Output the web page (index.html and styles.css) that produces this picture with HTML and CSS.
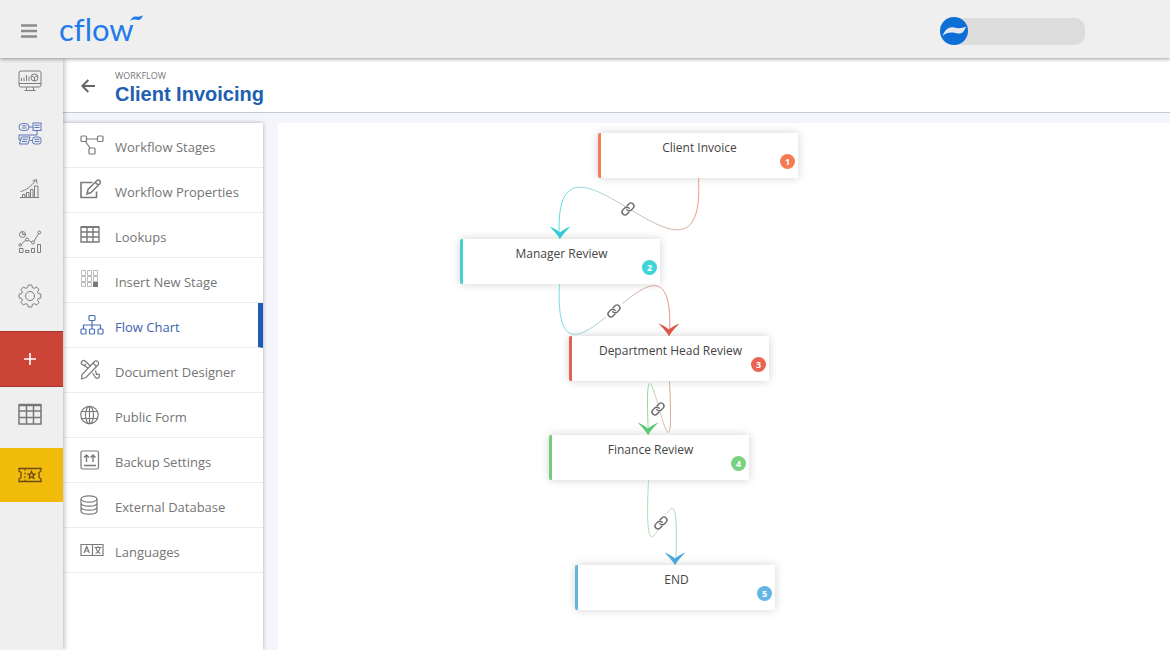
FILE: index.html
```html
<!DOCTYPE html>
<html lang="en">
<head>
    <meta charset="UTF-8">
    <meta name="viewport" content="width=device-width, initial-scale=1.0">
    <title>Cflow - Client Invoicing</title>
    <link rel="stylesheet" href="styles.css">
</head>
<body>
    <header class="topbar">
        <button class="menu-toggle" aria-label="Toggle menu">
            <svg width="16" height="14" viewBox="0 0 16 14"><path d="M0 1.5h16M0 7h16M0 12.5h16" stroke="#8c8c8c" stroke-width="2.4"/></svg>
        </button>
        <a class="logo" href="#" aria-label="cflow home">
            <span>cflow</span>
            <svg width="13" height="8" viewBox="0 0 13 8"><path d="M0 6C2 2 4 1 6.500 1.500C9 2 11 1.500 13 0C12 3.500 10 5.500 7.500 5C4.500 4.300 2.500 4.500 0 6z" fill="#1f7bea"/></svg>
        </a>
        <div class="user">
            <svg class="avatar" width="28" height="28" viewBox="0 0 28 28">
                <circle cx="14" cy="14" r="14" fill="#0d6fd6"/>
                <path d="M2.500 19C5.500 12 9 9.500 14 10.500C18 11.500 22 11.500 26 9.500C24.500 14 22.500 17 18 16.500C12.500 15.500 8 14 2.500 19z" fill="#e6e9ec"/>
            </svg>
            <span class="user-name"></span>
        </div>
    </header>

    <div class="shell">
        <nav class="rail" aria-label="Main">
            <a href="#" aria-label="Dashboard">
                <svg width="24" height="24" viewBox="0 0 24 24">
                    <rect x="1" y="2" width="22" height="16" rx="2"/>
                    <path d="M1 14.500h22M9 18l-1 3.500h8l-1-3.500M6.500 21.500h11M3.500 12V9M6 12V8.500M8.500 12V6M11 12V7.500"/>
                    <circle cx="16.500" cy="8.500" r="3.500"/><path d="M16.500 12V8.500l-3-1.700M16.500 8.500l3-1.700"/>
                </svg>
            </a>
            <a href="#" class="current" aria-label="Workflows">
                <svg width="24" height="24" viewBox="0 0 24 24">
                    <rect x="1" y="1.500" width="10" height="7" rx="3.500"/>
                    <rect x="15" y="1" width="8" height="7.500"/>
                    <path d="M11 5h4M4 3.800h4.500M4 6h4.500M16.500 3.300h5M16.500 5.500h5M19 8.500V13H1v5h2M3.500 15h8.500l-2 7H1.500zM4.500 17.300h5M4 19.500h5M12 18.500h3M16.500 17.300h5M16.500 19.500h5"/>
                    <rect x="14.500" y="15" width="8.500" height="7" rx="2.500"/>
                </svg>
            </a>
            <a href="#" aria-label="Reports">
                <svg width="24" height="24" viewBox="0 0 24 24">
                    <path d="M2 21.500h19M4.500 21.500v-3h2.500v3M8.500 21.500v-5H11v5M12.500 21.500v-8h2.500v8M16.500 21.500V10H20v11.500M2.500 15.500C8 14.500 13 10.500 17.500 4.500M14.500 5l4-1.500.5 4"/>
                </svg>
            </a>
            <a href="#" aria-label="Analytics">
                <svg width="24" height="24" viewBox="0 0 24 24">
                    <circle cx="4.500" cy="4.500" r="3"/><path d="M4.500 1.500v3h3M3.300 14.200l4.400-4M10.500 10.300l3 1.700M16 11.200l4.500-7.500"/>
                    <circle cx="2.200" cy="15" r="1.300"/><circle cx="9" cy="9.500" r="1.500"/><circle cx="15" cy="12.500" r="1.500"/><circle cx="21.300" cy="2.500" r="1.400"/>
                    <path d="M1.500 18.500h3.500v4H1.500zM7.500 20.500H11v2H7.500zM13.500 18.500h3v4h-3zM19.500 14.500h3v8h-3z"/>
                </svg>
            </a>
            <a href="#" aria-label="Settings">
                <svg width="24" height="24" viewBox="0 0 24 24">
                    <circle cx="12" cy="12" r="4.500"/>
                    <path d="M10.300 1h3.400l.8 2.700 1.600.7 2.500-1.400 2.400 2.400-1.400 2.500.7 1.600 2.700.8v3.400l-2.700.8-.7 1.600 1.400 2.500-2.400 2.400-2.500-1.400-1.600.7-.8 2.700h-3.400l-.8-2.700-1.600-.7L5.400 21 3 18.600l1.400-2.500-.7-1.600L1 13.700v-3.400l2.700-.8.7-1.600L3 5.400 5.400 3l2.500 1.400 1.600-.7z" stroke-linejoin="round"/>
                </svg>
            </a>
            <button class="rail-add" aria-label="Add">
                <svg width="12" height="12" viewBox="0 0 12 12"><path d="M6 0v12M0 6h12" stroke="#fff" stroke-width="1.600"/></svg>
            </button>
            <a href="#" class="rail-table" aria-label="Tables">
                <svg width="24" height="22" viewBox="0 0 24 22"><path d="M1 2h22" stroke-width="2.500"/><path d="M1 1v20h22V1M1 8h22M1 14.500h22M8.500 1v20M15.500 1v20" stroke-width="1.500"/></svg>
            </a>
            <a href="#" class="rail-ticket" aria-label="Tickets">
                <svg width="24" height="16" viewBox="0 0 24 16">
                    <path d="M1 1.500h22v2.500l-2 1.500v5l2 1.500v2.500H1V12l2-1.500v-5L1 4z"/><path d="M7 2v12" stroke-width="1" stroke-dasharray="2 1.500"/>
                    <path d="M13.500 4.500l1 2.300 2.500.2-1.900 1.700.6 2.500-2.200-1.300-2.200 1.300.6-2.500L10 7l2.500-.2z"/>
                </svg>
            </a>
        </nav>

        <main class="page">
            <div class="page-head">
                <a class="back" href="#" aria-label="Back">
                    <svg width="14" height="14" viewBox="0 0 14 14"><path d="M14 7H1.500M7.300 1L1.300 7l6 6" fill="none" stroke="#666" stroke-width="2"/></svg>
                </a>
                <div>
                    <div class="crumb">WORKFLOW</div>
                    <h1>Client Invoicing</h1>
                </div>
            </div>

            <div class="page-body">
                <nav class="side-menu" aria-label="Workflow">
                    <a href="#">
                        <svg width="24" height="24" viewBox="0 0 24 24"><rect x="1" y="3" width="5.500" height="5.500" rx="1"/><rect x="17.500" y="3" width="5.500" height="5.500" rx="1"/><rect x="9" y="15" width="6" height="6" rx="1"/><path d="M6.500 6h11M5.500 8.500l4.500 6.500"/></svg>
                        Workflow Stages
                    </a>
                    <a href="#">
                        <svg width="24" height="24" viewBox="0 0 24 24"><path d="M12.500 4.500H1v15h15.500v-6" stroke-width="1.600"/><path d="M7 16l1-4.500 9-9c2-1.500 4.500 1 3 3l-9 9zM15.500 4.500l3 3" stroke-width="1.500"/></svg>
                        Workflow Properties
                    </a>
                    <a href="#">
                        <svg width="24" height="24" viewBox="0 0 24 24"><path d="M1 4h18" stroke-width="2"/><path d="M1 3.500v15.500h18V3.500M1 9h18M1 14h18M7 4v15M13 4v15" stroke-width="1.400"/></svg>
                        Lookups
                    </a>
                    <a href="#">
                        <svg width="24" height="24" viewBox="0 0 24 24"><g stroke="#bbb" stroke-width="1"><path d="M1.500 2.500h4v5h-4zM7.500 2.500h4v5h-4zM13.500 2.500h4v5h-4zM1.500 8.500h4v5h-4zM7.500 8.500h4v5h-4zM13.500 8.500h4v5h-4zM1.500 14.500h4v4h-4zM7.500 14.500h4v4h-4z"/></g><path d="M13 14h5v5h-5z" fill="#777" stroke="none"/></svg>
                        Insert New Stage
                    </a>
                    <a href="#" class="active">
                        <svg width="24" height="24" viewBox="0 0 24 24"><rect x="9" y="2.500" width="6" height="5" rx="1"/><rect x="1" y="16" width="5" height="5" rx="1"/><rect x="9.500" y="16" width="5" height="5" rx="1"/><rect x="18" y="16" width="5" height="5" rx="1"/><path d="M12 7.500V16M3.500 16v-4h17v4"/></svg>
                        Flow Chart
                    </a>
                    <a href="#">
                        <svg width="24" height="24" viewBox="0 0 24 24"><path d="M14 4c2.500-2.500 6 .5 4 3L6 19.500l-4.500 1.500L2 16.500z"/><path d="M8 10L1.500 6C.5 4 3 1.500 5 3l5.500 5M12.500 15l3 4.500c2 2 5 0 3.500-3.500l-2.500.5-1-4M4 8l2-2M13 5l3.500 3.500"/></svg>
                        Document Designer
                    </a>
                    <a href="#">
                        <svg width="24" height="24" viewBox="0 0 24 24"><circle cx="9.500" cy="12" r="8.700"/><ellipse cx="9.500" cy="12" rx="4" ry="8.700"/><path d="M1.500 8.500h16M1.500 15.500h16M9.500 3.500v17"/></svg>
                        Public Form
                    </a>
                    <a href="#">
                        <svg width="24" height="24" viewBox="0 0 24 24"><rect x="1" y="3" width="17.500" height="18" rx="1.500"/><path d="M6.500 14V7M4 9.500L6.500 7 9 9.500M13 14V7M10.500 9.500L13 7l2.500 2.500M4 17.500h12" stroke-width="1.400"/></svg>
                        Backup Settings
                    </a>
                    <a href="#">
                        <svg width="24" height="24" viewBox="0 0 24 24"><ellipse cx="9" cy="6" rx="8" ry="3.200"/><path d="M1 6v12c0 4.200 16 4.200 16 0V6M1 10c0 4.200 16 4.200 16 0M1 14c0 4.200 16 4.200 16 0"/></svg>
                        External Database
                    </a>
                    <a href="#">
                        <svg width="24" height="24" viewBox="0 0 24 24"><path d="M1 6.500h22v11H1zM12.500 6.500v11M4 15l2.700-6.500L9.500 15M5 13h3.500M14.500 9.500h7M18 8v1.500M15.500 15.500c2.500-1 4-3 4.500-6M16 9.500c.5 3 2 5 4.500 6"/></svg>
                        Languages
                    </a>
                </nav>

                <section class="canvas">
                    <div class="node node-invoice"><h2>Client Invoice</h2><span class="badge">1</span></div>
                    <div class="node node-manager"><h2>Manager Review</h2><span class="badge">2</span></div>
                    <div class="node node-head"><h2>Department Head Review</h2><span class="badge">3</span></div>
                    <div class="node node-finance"><h2>Finance Review</h2><span class="badge">4</span></div>
                    <div class="node node-end"><h2>END</h2><span class="badge">5</span></div>

                    <svg class="edges" width="600" height="500" viewBox="0 0 600 500">
                        <defs>
                            <linearGradient id="e1" gradientUnits="userSpaceOnUse" x1="420" y1="0" x2="282" y2="0"><stop offset="0" stop-color="#ed8666"/><stop offset=".15" stop-color="#c9a396"/><stop offset=".5" stop-color="#bdbdb5"/><stop offset=".85" stop-color="#7fd3d3"/><stop offset="1" stop-color="#45d3d8"/></linearGradient>
                            <linearGradient id="e2" gradientUnits="userSpaceOnUse" x1="282" y1="0" x2="391" y2="0"><stop offset="0" stop-color="#5fdadd"/><stop offset=".5" stop-color="#bdbdbd"/><stop offset="1" stop-color="#e28277"/></linearGradient>
                            <linearGradient id="e3" gradientUnits="userSpaceOnUse" x1="392" y1="0" x2="370" y2="0"><stop offset="0" stop-color="#d39a85"/><stop offset=".5" stop-color="#c5cdb5"/><stop offset="1" stop-color="#83d08c"/></linearGradient>
                            <linearGradient id="e4" gradientUnits="userSpaceOnUse" x1="370" y1="0" x2="398" y2="0"><stop offset="0" stop-color="#9cdaa4"/><stop offset=".5" stop-color="#c2dcc9"/><stop offset="1" stop-color="#93d3bd"/></linearGradient>
                            <path id="arrow" d="M0 0C-3-5-7-9-10.500-12.500C-6-11-3-9 0-6.500C3-9 6-11 10.500-12.500C7-9 3-5 0 0z"/>
                            <g id="link" fill="none" stroke="#686868" stroke-width="2.300" stroke-linecap="round">
                                <path d="M-6 6L6-6" stroke="#fff" stroke-width="5"/>
                                <g transform="scale(.6) translate(-12 -12)">
                                    <path d="M10 13a5 5 0 0 0 7.540.540l3-3a5 5 0 0 0-7.070-7.070l-3 3"/>
                                    <path d="M14 11a5 5 0 0 0-7.540-.540l-3 3a5 5 0 0 0 7.070 7.070l3-3"/>
                                </g>
                            </g>
                        </defs>
                        <g fill="none" opacity=".85">
                            <path d="M420.500 55C429 205 272 -34 281.500 116" stroke="url(#e1)"/>
                            <path d="M281.500 161C274 311 399 63 391.500 213" stroke="url(#e2)"/>
                            <path d="M391.500 258C399 411 363 159 370.500 312" stroke="url(#e3)"/>
                            <path d="M370.500 357C363 509 405 290 397.500 442" stroke="url(#e4)"/>
                        </g>
                        <use href="#arrow" x="282" y="116" fill="#2fcdd3"/>
                        <use href="#arrow" x="391" y="213" fill="#dd5546"/>
                        <use href="#arrow" x="370" y="312" fill="#5fc874"/>
                        <use href="#arrow" x="397" y="442" fill="#4aa9dc"/>
                        <use href="#link" x="350" y="86"/>
                        <use href="#link" x="336" y="188"/>
                        <use href="#link" x="380" y="286"/>
                        <use href="#link" x="383" y="400"/>
                    </svg>
                </section>
            </div>
        </main>
    </div>
</body>
</html>
```
FILE: styles.css
```css
* { box-sizing: border-box; }
body { font-family: "Open Sans", "Noto Sans", sans-serif; margin: 0; min-height: 100vh; display: flex; flex-direction: column; background: #f3f5fa; color: #444; }
a { text-decoration: none; color: inherit; }
button { border: none; background: none; padding: 0; cursor: pointer; }
svg { display: block; flex-shrink: 0; }

/* top bar */
.topbar { height: 58px; background: #efefef; display: flex; align-items: center; padding: 4px 85px 0 21px; box-shadow: 0 1px 4px rgba(0,0,0,0.4); position: relative; z-index: 3; }
.logo { display: flex; align-items: flex-start; margin-left: 22px; color: #1f7bea; font-family: Lato, sans-serif; font-size: 31px; line-height: 28px; padding-bottom: 4px; font-variant-ligatures: none; }
.logo svg { margin-left: -4px; }
.user { margin-left: auto; display: flex; align-items: center; }
.avatar { position: relative; z-index: 1; }
.user-name { width: 131px; height: 27px; margin-left: -14px; background: #dcdcdc; border-radius: 0 10px 10px 0; }

/* left rail */
.shell { flex: 1; display: flex; }
.rail { width: 63px; background: #efefef; box-shadow: 1px 0 5px rgba(0,0,0,0.3); position: relative; z-index: 2; }
.rail a, .rail button { display: flex; align-items: center; justify-content: center; width: 100%; height: 54px; padding-right: 4px; }
.rail a:first-child { height: 49px; padding-bottom: 4px; }
.rail svg { fill: none; stroke: #7d7d7d; stroke-width: 1; }
.rail .current svg { stroke: #5b76ba; }
.rail .rail-add { height: 56px; margin-top: 8px; background: #cb4437; border-top: 1px solid #a3352b; border-bottom: 1px solid #a3352b; }
.rail .rail-table { height: 53px; margin-bottom: 8px; }
.rail .rail-table svg { stroke: #777; }
.rail .rail-ticket { background: #f1bb0c; }
.rail .rail-ticket svg { stroke: #6b4a12; stroke-width: 1.3; }

/* page heading */
.page { flex: 1; min-width: 0; display: flex; flex-direction: column; }
.page-head { height: 55px; display: flex; align-items: center; gap: 20px; padding: 5px 18px 0; background: #fff; border-bottom: 1px solid #c4c9d2; }
.back { padding-bottom: 4px; }
.crumb { font-size: 9px; line-height: 12px; color: #777; }
h1 { margin: 0; font: bold 20px/24px "Liberation Sans", Arial, sans-serif; color: #2160b0; }

/* workflow menu */
.page-body { flex: 1; display: flex; gap: 15px; padding-top: 10px; }
.side-menu { width: 200px; background: #fff; box-shadow: 0 0 4px rgba(0,0,0,0.3); }
.side-menu a { display: flex; align-items: center; gap: 11px; height: 45px; padding: 3px 0 0 17px; border-bottom: 1px solid #ebeef0; font-size: 13px; color: #757575; }
.side-menu svg { fill: none; stroke: #7a7a7a; stroke-width: 1.2; margin-bottom: 4px; }
.side-menu .active { color: #3d62ae; border-right: 5px solid #1c5db8; }
.side-menu .active svg { stroke: #4a6fb8; }

/* flow chart */
.canvas { flex: 1; background: #fff; position: relative; overflow: hidden; }
.edges { position: absolute; left: 0; top: 0; }
.node { position: absolute; width: 200px; height: 45px; background: #fff; border-left: 3px solid; border-radius: 2px 0 0 2px; box-shadow: 0 0 10px rgba(0,0,0,0.18); }
.node h2 { margin: 0; padding-top: 6px; font-size: 12px; line-height: 18px; font-weight: normal; text-align: center; color: #444; }
.badge { position: absolute; right: 3px; bottom: 9px; width: 15px; height: 15px; border-radius: 50%; color: #fff; font-size: 9px; line-height: 15px; font-weight: bold; text-align: center; }
.node-invoice { left: 320px; top: 10px; border-color: #f27d57; }
.node-invoice .badge { background: #f57c51; }
.node-manager { left: 182px; top: 116px; border-color: #45d0cf; }
.node-manager .badge { background: #3fd5d6; }
.node-head { left: 291px; top: 213px; border-color: #e8604f; }
.node-head .badge { background: #ea6353; }
.node-finance { left: 271px; top: 312px; border-color: #74cc7e; }
.node-finance .badge { background: #79d182; }
.node-end { left: 297px; top: 442px; border-color: #62b5e1; }
.node-end .badge { background: #62b6e4; }
```
